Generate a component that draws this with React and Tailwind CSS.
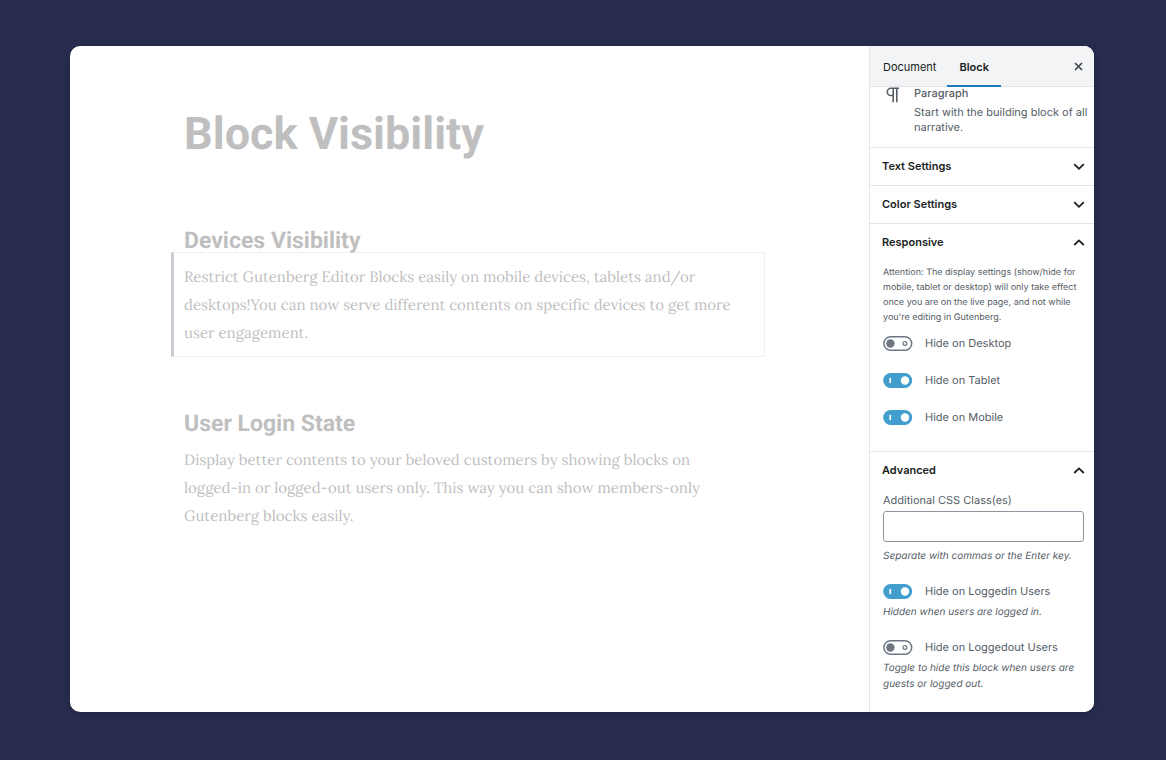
import { useState } from 'react';

function Chevron({ open }) {
  return (
    <svg viewBox="0 0 12 8" className="h-2 w-3" fill="none" stroke="currentColor" strokeWidth="1.8" aria-hidden="true">
      <path d={open ? 'M1.2 6 6 1.4l4.8 4.6' : 'M1.2 1.2 6 5.8l4.8-4.6'} />
    </svg>
  );
}

function Panel({ title, initialOpen = false, children }) {
  const [open, setOpen] = useState(initialOpen);
  return (
    <section className="border-t border-[#e2e4e7]">
      <h2>
        <button
          type="button"
          aria-expanded={open}
          onClick={() => setOpen(!open)}
          className="flex h-[37px] w-full items-center justify-between pl-3 pr-[9px] text-[11px] font-semibold text-[#191e23]"
        >
          {title}
          <Chevron open={open} />
        </button>
      </h2>
      {open && children}
    </section>
  );
}

function Toggle({ id, label, initial = false, help }) {
  const [on, setOn] = useState(initial);
  return (
    <div>
      <div className="flex h-4 items-center gap-3">
        <span className="relative h-[15px] w-[30px] shrink-0">
          <input
            id={id}
            type="checkbox"
            role="switch"
            checked={on}
            onChange={() => setOn(!on)}
            className="absolute inset-0 h-full w-full cursor-pointer appearance-none"
          />
          <svg viewBox="0 0 30 15" className="pointer-events-none absolute inset-0 h-full w-full" aria-hidden="true">
            {on ? (
              <>
                <rect x="0.2" width="29" height="15" rx="7.5" fill="#419ecd" />
                <rect x="6.4" y="4.9" width="1.7" height="5.2" fill="#fff" />
                <circle cx="22" cy="7.5" r="4.2" fill="#fff" />
              </>
            ) : (
              <>
                <rect x="0.9" y="0.8" width="27.8" height="13.4" rx="6.7" fill="#fff" stroke="#6c7781" strokeWidth="1.5" />
                <circle cx="7.4" cy="7.5" r="4.2" fill="#6c7781" />
                <circle cx="21.9" cy="7.5" r="1.9" fill="none" stroke="#6c7781" strokeWidth="1.2" />
              </>
            )}
          </svg>
        </span>
        <label htmlFor={id} className="cursor-pointer text-[#555d66]">{label}</label>
      </div>
      {help && <p className="mt-[5px] text-[10px] italic leading-4">{help}</p>}
    </div>
  );
}

function Sidebar() {
  return (
    <aside className="flex w-[225px] shrink-0 flex-col border-l border-[#e2e4e7] bg-white font-['Inter',sans-serif] text-[11px] text-[#555d66]">
      <div className="flex h-[41px] items-stretch border-b border-[#e2e4e7] bg-[#f3f4f5] text-[#191e23]">
        <button type="button" className="pl-[13px] pr-[11px] pt-0.5">Document</button>
        <button type="button" className="-mb-px border-b-2 border-[#2179b9] px-3 pt-[3px] font-semibold">Block</button>
        <button type="button" aria-label="Close settings" className="ml-auto px-[11px]">
          <svg viewBox="0 0 9 9" className="h-[9px] w-[9px]" stroke="#40464d" strokeWidth="1.7" aria-hidden="true">
            <path d="m1 1 7 7M8 1 1 8" />
          </svg>
        </button>
      </div>

      <div className="flex h-[60px] gap-3.5 pl-4">
        <svg viewBox="0 0 14 16" className="h-4 w-3.5 shrink-0" fill="none" stroke="#555d66" strokeWidth="1.6" aria-hidden="true">
          <path d="M13 1.3H4.9a3.6 3.6 0 0 0 0 7.2h2.3M7.2 1.3v14M10.8 1.3v14" />
        </svg>
        <div>
          <h2 className="h-[18px] font-medium leading-[13px]">Paragraph</h2>
          <p className="leading-[15px]">Start with the building block of all narrative.</p>
        </div>
      </div>

      <Panel title="Text Settings" />
      <Panel title="Color Settings" />

      <Panel title="Responsive" initialOpen>
        <div className="px-[13px] pb-[26px] pt-1">
          <p className="text-[9px] leading-[15px]">
            Attention: The display settings (show/hide for<br />
            mobile, tablet or desktop) will only take effect<br />
            once you are on the live page, and not while<br />
            you're editing in Gutenberg.
          </p>
          <div className="mt-2.5 flex flex-col gap-[21px]">
            <Toggle id="hide-desktop" label="Hide on Desktop" />
            <Toggle id="hide-tablet" label="Hide on Tablet" initial />
            <Toggle id="hide-mobile" label="Hide on Mobile" initial />
          </div>
        </div>
      </Panel>

      <Panel title="Advanced" initialOpen>
        <div className="pb-5 pl-[13px] pr-2.5 pt-[3px]">
          <label htmlFor="css-classes" className="block leading-4">Additional CSS Class(es)</label>
          <input
            id="css-classes"
            type="text"
            className="mt-[3px] block h-[31px] w-full rounded-[3px] border border-[#8d96a0] px-2"
          />
          <p className="mt-1.5 text-[10px] italic leading-4">Separate with commas or the Enter key.</p>
          <div className="mt-[19px] flex flex-col gap-[19px]">
            <Toggle id="hide-loggedin" label="Hide on Loggedin Users" initial help="Hidden when users are logged in." />
            <Toggle
              id="hide-loggedout"
              label="Hide on Loggedout Users"
              help="Toggle to hide this block when users are guests or logged out."
            />
          </div>
        </div>
      </Panel>
    </aside>
  );
}

export default function App() {
  return (
    <div className="flex min-h-screen bg-[#282d50] px-[70px] pb-12 pt-[46px] pr-[72px] antialiased [text-rendering:geometricPrecision]">
      <div className="flex flex-1 overflow-hidden rounded-[10px] bg-white shadow-[0_2px_8px_rgba(0,0,0,0.2)]">
        <main className="min-w-0 flex-1 pr-[3px] text-[#bfbfbf]">
          <article className="mx-auto max-w-[594px] pt-[61px]">
            <h1 className="px-[13px] font-['Roboto',sans-serif] text-[45px] font-bold leading-[54px]">Block Visibility</h1>
            <h2 className="mt-5 px-[13px] pt-12 font-['Roboto',sans-serif] text-[23px] font-bold leading-[23px]">
              Devices Visibility
            </h2>
            <p className="border border-l-[3px] border-[#eeeff0] border-l-[#c9ccd1] pb-2 pl-2.5 pr-2 pt-[11px] font-['Lora','Liberation_Serif',serif] text-[15px] leading-[28px]">
              Restrict Gutenberg Editor Blocks easily on mobile devices, tablets and/or<br />
              desktops!You can now serve different contents on specific devices to get more<br />
              user engagement.
            </p>
            <h2 className="mt-[55px] px-[13px] font-['Roboto',sans-serif] text-[23px] font-bold leading-[23px]">
              User Login State
            </h2>
            <p className="mt-3 px-[13px] font-['Lora','Liberation_Serif',serif] text-[15px] leading-[28px]">
              Display better contents to your beloved customers by showing blocks on<br />
              logged-in or logged-out users only. This way you can show members-only<br />
              Gutenberg blocks easily.
            </p>
          </article>
        </main>
        <Sidebar />
      </div>
    </div>
  );
}
